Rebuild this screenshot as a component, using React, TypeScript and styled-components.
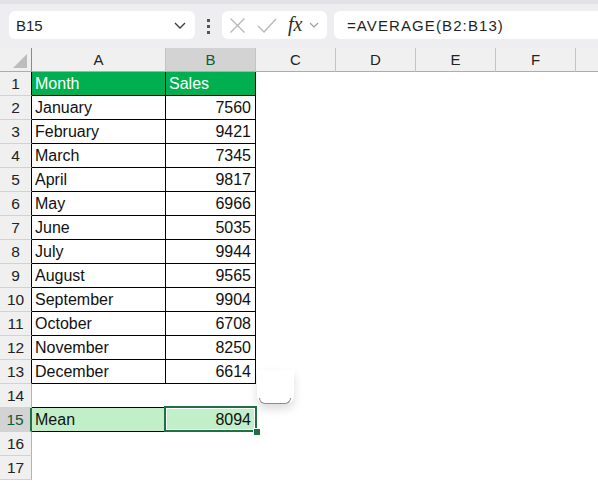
import styled, { createGlobalStyle } from 'styled-components';

const GlobalStyle = createGlobalStyle`
  html, body {
    margin: 0;
    padding: 0;
    background: #fff;
    overflow: hidden;
  }
  body {
    font-family: "Liberation Sans", Arial, sans-serif;
  }
`;

const sales: [string, number][] = [
  ['January', 7560],
  ['February', 9421],
  ['March', 7345],
  ['April', 9817],
  ['May', 6966],
  ['June', 5035],
  ['July', 9944],
  ['August', 9565],
  ['September', 9904],
  ['October', 6708],
  ['November', 8250],
  ['December', 6614],
];

const columns = ['A', 'B', 'C', 'D', 'E', 'F', 'G'];
const ROWS = 17;
const ACTIVE_ROW = 15;
const ACTIVE_COL = 1;

const HEAD_GREEN = '#00b050';
const MEAN_GREEN = '#c1efc8';
const SEL_GREEN = '#1e7145';

type CellInfo = {
  text?: string;
  fill?: string;
  color?: string;
  align?: 'left' | 'right';
  right?: string;
  bottom?: string;
};

// what sits in each cell of the sheet
const cellAt = (row: number, col: number): CellInfo => {
  if (col > 1) return {};
  if (row === 1) {
    return {
      text: col === 0 ? 'Month' : 'Sales',
      fill: HEAD_GREEN,
      color: '#fff',
      right: '#000',
      bottom: '#000',
    };
  }
  if (row >= 2 && row <= 13) {
    const [month, value] = sales[row - 2];
    return {
      text: col === 0 ? month : String(value),
      align: col === 0 ? 'left' : 'right',
      right: '#000',
      bottom: '#000',
    };
  }
  if (row === 14) return { bottom: '#000' };
  if (row === 15) {
    return {
      text: col === 0 ? 'Mean' : '8094',
      align: col === 0 ? 'left' : 'right',
      fill: MEAN_GREEN,
      right: '#000',
      bottom: '#000',
    };
  }
  return {};
};

const App = () => {
  return (
    <>
      <GlobalStyle />
      <Toolbar>
        <NameBox>
          <span>B15</span>
          <svg width="12" height="7" viewBox="0 0 12 7">
            <path d="M1 1l5 5 5-5" fill="none" stroke="#3a3a3a" strokeWidth="1.3" />
          </svg>
        </NameBox>
        <Dots>
          <i />
          <i />
          <i />
        </Dots>
        <FxGroup>
          <svg width="17" height="17" viewBox="0 0 17 17">
            <path d="M1.5 1.5l14 14M15.5 1.5l-14 14" stroke="#b8b8b8" strokeWidth="1.4" />
          </svg>
          <svg width="20" height="15" viewBox="0 0 20 15">
            <path d="M1 8l6 6L19 1" fill="none" stroke="#b8b8b8" strokeWidth="1.4" />
          </svg>
          <FxLabel>fx</FxLabel>
          <svg width="10" height="6" viewBox="0 0 10 6">
            <path d="M1 1l4 4 4-4" fill="none" stroke="#9a9a9a" strokeWidth="1.1" />
          </svg>
        </FxGroup>
        <FormulaInput>=AVERAGE(B2:B13)</FormulaInput>
      </Toolbar>

      <GridWrap>
        <Sheet>
          <Corner>
            <Triangle />
          </Corner>
          {columns.map((c, i) => (
            <ColHead key={c} $active={i === ACTIVE_COL}>
              {i < 6 ? c : ''}
            </ColHead>
          ))}
          {Array.from({ length: ROWS }, (_, k) => {
            const row = k + 1;
            const active = row === ACTIVE_ROW;
            const edge = active ? SEL_GREEN : row <= 13 ? '#000' : '#b4b4b4';
            return [
              <RowHead key={`h${row}`} $active={active} $edge={edge}>
                {row}
              </RowHead>,
              ...columns.map((c, col) => {
                const info = cellAt(row, col);
                const selected = active && col === ACTIVE_COL;
                return (
                  <Cell
                    key={`${c}${row}`}
                    $fill={info.fill}
                    $color={info.color}
                    $align={info.align}
                    $right={info.right}
                    $bottom={info.bottom}
                  >
                    {info.text}
                    {selected && (
                      <Selection>
                        <FillHandle />
                      </Selection>
                    )}
                  </Cell>
                );
              }),
            ];
          })}
        </Sheet>
        <QuickPopup>
          <PopupEdge />
        </QuickPopup>
      </GridWrap>
    </>
  );
};

export default App;

const Toolbar = styled.div`
  box-sizing: border-box;
  height: 48px;
  display: flex;
  align-items: flex-start;
  padding: 7px 0 0 9px;
  background: #eeedf0;
  border-top: 4px solid #e4e2e7;
`;

const NameBox = styled.div`
  box-sizing: border-box;
  width: 186px;
  height: 28px;
  display: flex;
  align-items: center;
  justify-content: space-between;
  padding: 0 9px 0 7px;
  background: #fff;
  border-radius: 6px;
  font-size: 15px;
  color: #1f1f1f;
`;

const Dots = styled.div`
  display: flex;
  flex-direction: column;
  gap: 3px;
  margin: 8px 0 0 12px;

  i {
    display: block;
    width: 3px;
    height: 3px;
    background: #555;
  }
`;

const FxGroup = styled.div`
  box-sizing: border-box;
  width: 105px;
  height: 28px;
  margin-left: 12px;
  display: flex;
  align-items: center;
  gap: 11px;
  padding-left: 7px;
  background: #fff;
  border-radius: 6px;

  svg:last-child {
    margin-left: -4px;
  }
`;

const FxLabel = styled.span`
  font-family: "Liberation Serif", "Times New Roman", serif;
  font-style: italic;
  font-size: 20px;
  color: #2b2b2b;
  line-height: 1;
  margin-top: -3px;
`;

const FormulaInput = styled.div`
  box-sizing: border-box;
  flex: 1;
  height: 28px;
  margin-left: 7px;
  padding-left: 13px;
  display: flex;
  align-items: center;
  background: #fff;
  border-radius: 6px 0 0 6px;
  font-size: 15px;
  letter-spacing: 1.1px;
  color: #1f1f1f;
`;

const GridWrap = styled.div`
  position: relative;
  height: 434px;
  overflow: hidden;
`;

const Sheet = styled.div`
  display: grid;
  grid-template-columns: 32px 134px 90px repeat(5, 80px);
  grid-auto-rows: 24px;
`;

const Corner = styled.div`
  position: relative;
  box-sizing: border-box;
  background: #f0f0f0;
  border-right: 1px solid #8a8a8a;
  border-bottom: 1px solid #acacac;
`;

const Triangle = styled.span`
  position: absolute;
  right: 4px;
  bottom: 3px;
  width: 14px;
  height: 14px;
  background: #bdbdbd;
  clip-path: polygon(100% 0, 100% 100%, 0 100%);
`;

const ColHead = styled.div<{ $active?: boolean }>`
  box-sizing: border-box;
  display: flex;
  align-items: center;
  justify-content: center;
  background: ${({ $active }) => ($active ? '#d3d3d3' : '#f0f0f0')};
  color: ${({ $active }) => ($active ? '#0e5c36' : '#222')};
  border-right: 1px solid #c4c4c4;
  border-bottom: 1px solid #acacac;
  font-size: 15px;
`;

const RowHead = styled.div<{ $active?: boolean; $edge: string }>`
  box-sizing: border-box;
  display: flex;
  align-items: center;
  justify-content: center;
  background: ${({ $active }) => ($active ? '#d3d3d3' : '#f0f0f0')};
  color: ${({ $active }) => ($active ? '#0e5c36' : '#222')};
  border-right: ${({ $active }) => ($active ? '2px' : '1px')} solid ${({ $edge }) => $edge};
  border-bottom: 1px solid #d2d2d2;
  font-size: 15.5px;
  padding-top: 1px;
`;

const Cell = styled.div<{
  $fill?: string;
  $color?: string;
  $align?: 'left' | 'right';
  $right?: string;
  $bottom?: string;
}>`
  position: relative;
  box-sizing: border-box;
  padding: 1px 4px 0 3px;
  background: ${({ $fill }) => $fill || '#fff'};
  color: ${({ $color }) => $color || '#111'};
  text-align: ${({ $align }) => $align || 'left'};
  border-right: 1px solid ${({ $right }) => $right || 'transparent'};
  border-bottom: 1px solid ${({ $bottom }) => $bottom || 'transparent'};
  font-size: 16px;
  line-height: 22px;
  white-space: nowrap;
`;

const Selection = styled.div`
  position: absolute;
  top: -2px;
  left: -2px;
  right: -2px;
  bottom: -1px;
  border: 2px solid ${SEL_GREEN};
  box-shadow: inset 0 0 0 1px #fff;
  z-index: 2;
  pointer-events: none;
`;

const FillHandle = styled.span`
  position: absolute;
  right: -5px;
  bottom: -5px;
  width: 6px;
  height: 6px;
  background: ${SEL_GREEN};
  border-top: 1px solid #fff;
  border-left: 1px solid #fff;
`;

const QuickPopup = styled.div`
  position: absolute;
  left: 257px;
  top: 322px;
  width: 37px;
  height: 34px;
  background: #fff;
  border-radius: 0 0 8px 8px;
  box-shadow: 0 5px 10px rgba(0, 0, 0, 0.14);
  z-index: 3;
`;

const PopupEdge = styled.span`
  position: absolute;
  left: 2px;
  right: 3px;
  bottom: 0;
  height: 5px;
  border: 1px solid #8c8c8c;
  border-top: none;
  border-radius: 0 0 6px 6px;
`;
